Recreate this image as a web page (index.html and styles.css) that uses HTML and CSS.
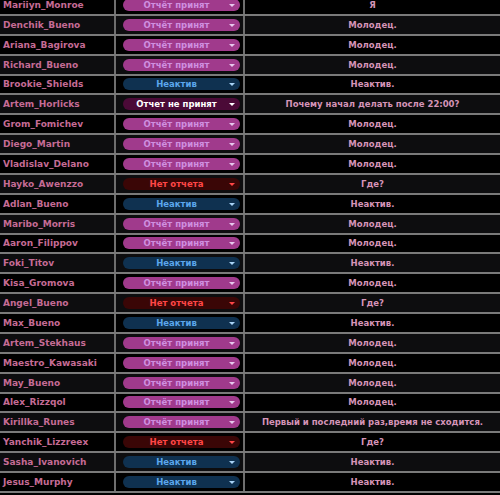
FILE: index.html
```html
<!DOCTYPE html>
<html lang="ru">
<head>
<meta charset="UTF-8">
<meta name="viewport" content="width=device-width, initial-scale=1.0">
<title>Отчёты</title>
<link rel="stylesheet" href="styles.css">
</head>
<body>
<div class="sheet">
  <div class="row"><div class="name">Mariiyn_Monroe</div><div class="state"><span class="pill ok">Отчёт принят</span></div><div class="note">Я</div></div>
  <div class="row"><div class="name">Denchik_Bueno</div><div class="state"><span class="pill ok">Отчёт принят</span></div><div class="note">Молодец.</div></div>
  <div class="row"><div class="name">Ariana_Bagirova</div><div class="state"><span class="pill ok">Отчёт принят</span></div><div class="note">Молодец.</div></div>
  <div class="row"><div class="name">Richard_Bueno</div><div class="state"><span class="pill ok">Отчёт принят</span></div><div class="note">Молодец.</div></div>
  <div class="row"><div class="name">Brookie_Shields</div><div class="state"><span class="pill idle">Неактив</span></div><div class="note">Неактив.</div></div>
  <div class="row"><div class="name">Artem_Horlicks</div><div class="state"><span class="pill bad">Отчет не принят</span></div><div class="note">Почему начал делать после 22:00?</div></div>
  <div class="row"><div class="name">Grom_Fomichev</div><div class="state"><span class="pill ok">Отчёт принят</span></div><div class="note">Молодец.</div></div>
  <div class="row"><div class="name">Diego_Martin</div><div class="state"><span class="pill ok">Отчёт принят</span></div><div class="note">Молодец.</div></div>
  <div class="row"><div class="name">Vladislav_Delano</div><div class="state"><span class="pill ok">Отчёт принят</span></div><div class="note">Молодец.</div></div>
  <div class="row"><div class="name">Hayko_Awenzzo</div><div class="state"><span class="pill none">Нет отчета</span></div><div class="note">Где?</div></div>
  <div class="row"><div class="name">Adlan_Bueno</div><div class="state"><span class="pill idle">Неактив</span></div><div class="note">Неактив.</div></div>
  <div class="row"><div class="name">Maribo_Morris</div><div class="state"><span class="pill ok">Отчёт принят</span></div><div class="note">Молодец.</div></div>
  <div class="row"><div class="name">Aaron_Filippov</div><div class="state"><span class="pill ok">Отчёт принят</span></div><div class="note">Молодец.</div></div>
  <div class="row"><div class="name">Foki_Titov</div><div class="state"><span class="pill idle">Неактив</span></div><div class="note">Неактив.</div></div>
  <div class="row"><div class="name">Kisa_Gromova</div><div class="state"><span class="pill ok">Отчёт принят</span></div><div class="note">Молодец.</div></div>
  <div class="row"><div class="name">Angel_Bueno</div><div class="state"><span class="pill none">Нет отчета</span></div><div class="note">Где?</div></div>
  <div class="row"><div class="name">Max_Bueno</div><div class="state"><span class="pill idle">Неактив</span></div><div class="note">Неактив.</div></div>
  <div class="row"><div class="name">Artem_Stekhaus</div><div class="state"><span class="pill ok">Отчёт принят</span></div><div class="note">Молодец.</div></div>
  <div class="row"><div class="name">Maestro_Kawasaki</div><div class="state"><span class="pill ok">Отчёт принят</span></div><div class="note">Молодец.</div></div>
  <div class="row"><div class="name">May_Bueno</div><div class="state"><span class="pill ok">Отчёт принят</span></div><div class="note">Молодец.</div></div>
  <div class="row"><div class="name">Alex_Rizzqol</div><div class="state"><span class="pill ok">Отчёт принят</span></div><div class="note">Молодец.</div></div>
  <div class="row"><div class="name">Kirillka_Runes</div><div class="state"><span class="pill ok">Отчёт принят</span></div><div class="note">Первый и последний раз,время не сходится.</div></div>
  <div class="row"><div class="name">Yanchik_Lizzreex</div><div class="state"><span class="pill none">Нет отчета</span></div><div class="note">Где?</div></div>
  <div class="row"><div class="name">Sasha_Ivanovich</div><div class="state"><span class="pill idle">Неактив</span></div><div class="note">Неактив.</div></div>
  <div class="row"><div class="name">Jesus_Murphy</div><div class="state"><span class="pill idle">Неактив</span></div><div class="note">Неактив.</div></div>
</div>
</body>
</html>
```

FILE: styles.css
```css
/* Page */
body {
    margin: 0;
    background-color: #000;
    font-family: "DejaVu Sans", sans-serif;
    font-weight: bold;
    overflow: hidden;
}

/* Table of reports */
.sheet {
    margin-top: -4px;
    display: flex;
    flex-direction: column;
}

.row {
    display: grid;
    grid-template-columns: 116px 129px 1fr;
    height: 19.875px;
    box-sizing: border-box;
    border-bottom: 2px solid #7a7a7a;
    background-color: #000;
}

.row:nth-child(even) {
    background-color: #0d0d0f;
}

.name,
.state,
.note {
    display: flex;
    align-items: center;
    border-right: 2px solid #6e6e6e;
    overflow: hidden;
    white-space: nowrap;
}

.name {
    padding-left: 3px;
    font-size: 9px;
    color: #c56b95;
}

.state {
    padding-left: 7px;
}

.note {
    justify-content: center;
    font-size: 8.5px;
    color: #d594b8;
    border-right: none;
}

/* Status dropdowns */
.pill {
    position: relative;
    display: flex;
    align-items: center;
    justify-content: center;
    width: 117px;
    height: 12px;
    box-sizing: border-box;
    padding-right: 10px;
    border-radius: 6px;
    font-size: 8.5px;
}

.pill::after {
    content: "";
    position: absolute;
    right: 5px;
    top: 5px;
    border-left: 3px solid transparent;
    border-right: 3px solid transparent;
    border-top: 3px solid currentColor;
}

.ok {
    background-color: #a03a8c;
    color: #cf8fe0;
}

.ok::after {
    border-top-color: #e8c9ee;
}

.bad {
    background-color: #4b0a37;
    color: #ffffff;
}

.none {
    background-color: #3a0606;
    color: #ff4646;
}

.idle {
    background-color: #0f3150;
    color: #5ba6ec;
}

.idle::after {
    border-top-color: #a9d3f6;
}
```
